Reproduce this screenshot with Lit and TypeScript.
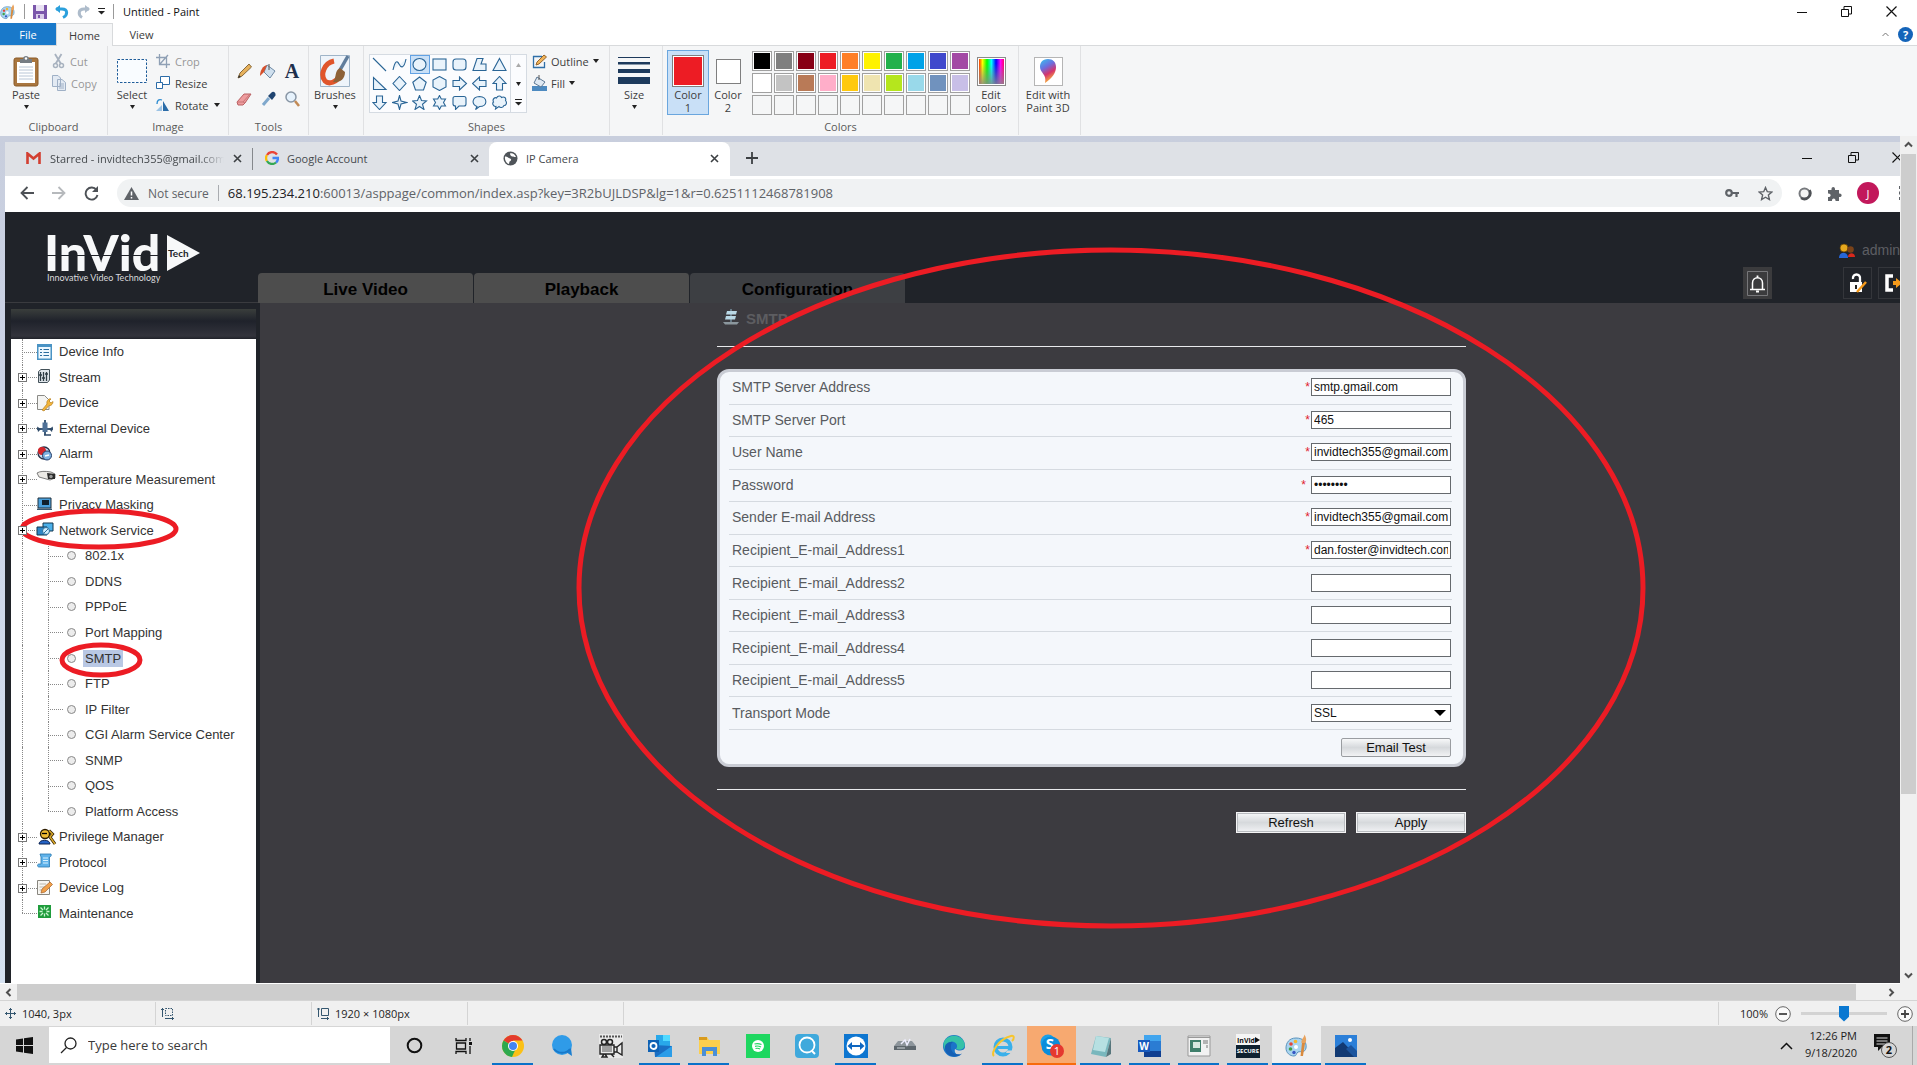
import { LitElement, html, svg, css, nothing, type TemplateResult } from "lit";
import { customElement } from "lit/decorators.js";
import { classMap } from "lit/directives/class-map.js";
import { styleMap } from "lit/directives/style-map.js";

const icon = (w: number, h: number, body: TemplateResult | unknown, vb = `0 0 ${w} ${h}`) =>
  html`<svg class="ico" width=${w} height=${h} viewBox=${vb} fill="none" aria-hidden="true">${body}</svg>`;

const base = css`
  * { box-sizing: border-box; }
  :host { font-family: "Open Sans", "Noto Sans", sans-serif; font-size: 11px; color: #222; }
  button { font: inherit; color: inherit; background: none; border: 0; padding: 0; margin: 0; }
  a { color: inherit; text-decoration: none; }
  ul { list-style: none; margin: 0; padding: 0; }
  svg { display: block; flex: none; }
`;

/* ---------- shared glyphs ---------- */
const caret = (w = 6) => icon(w, 4, svg`<path d="M0 0H${w}L${w / 2} 4Z" fill="#222"/>`);
const minGlyph = icon(10, 10, svg`<path d="M0 5.500H10" stroke="#111"/>`);
const restoreGlyph = icon(11, 11, svg`<path d="M.5 3.500H7.500V10.500H.5ZM3 3V.5H10.500V8H8" stroke="#111"/>`);
const closeGlyph = icon(11, 11, svg`<path d="M.5 .5L10.500 10.500M10.500 .5L.5 10.500" stroke="#111" stroke-width="1.200"/>`);
const paletteGlyph = (s: number) => icon(s, s, svg`
  <path d="M11 4C4 4 1 9 1 14c0 5 4 8 8 8 3 0 2-3 4-4 3-1 7 1 8-4C22 8 18 4 11 4Z" fill="#a9d4ef" stroke="#5b93bd"/>
  <circle cx="6" cy="10" r="1.800" fill="#e3463b"/><circle cx="10.500" cy="7.500" r="1.800" fill="#f5b62c"/>
  <circle cx="5.500" cy="15" r="1.800" fill="#43a047"/><circle cx="9" cy="18.500" r="1.700" fill="#3757c4"/><circle cx="11" cy="13" r="2" fill="#fff"/>
  <path d="M20 9L18 22L15.500 22L17 9Z" fill="#d98a3d"/><path d="M16.500 9C16 5 19 4 19.500 0.500C21.500 4 21.500 6 20.500 9Z" fill="#e9a35e"/>`, "0 0 24 24");

/* ---------- Paint ribbon ---------- */
const SHAPES = [
  svg`<path d="M1 1L14 14"/>`,
  svg`<path d="M1 13C3 4 5 3 7 7S12 12 14 2"/>`,
  svg`<ellipse cx="7.500" cy="7.500" rx="6.500" ry="6"/>`,
  svg`<rect x="1" y="2" width="13" height="11"/>`,
  svg`<rect x="1" y="2" width="13" height="11" rx="3"/>`,
  svg`<path d="M5 1.500H11L9 7H14V13.500H1Z"/>`,
  svg`<path d="M7.500 1.500L14 13.500H1Z"/>`,
  svg`<path d="M1.500 1.500V13.500H14Z"/>`,
  svg`<path d="M7.500 .5L14 7.500L7.500 14.500L1 7.500Z"/>`,
  svg`<path d="M7.500 1L14.200 6.200L11.500 14H3.500L.8 6.200Z"/>`,
  svg`<path d="M7.500 .5L14 4V11L7.500 14.500L1 11V4Z"/>`,
  svg`<path d="M1 4.500H7.500V1L14.500 7.500L7.500 14V10.500H1Z"/>`,
  svg`<path d="M14 4.500H7.500V1L.5 7.500L7.500 14V10.500H14Z"/>`,
  svg`<path d="M4.500 14V7.500H1L7.500 .5L14 7.500H10.500V14Z"/>`,
  svg`<path d="M4.500 1V7.500H1L7.500 14.500L14 7.500H10.500V1Z"/>`,
  svg`<path d="M7.500 .5L9 6L14.500 7.500L9 9L7.500 14.500L6 9L.5 7.500L6 6Z"/>`,
  svg`<path d="M7.500 .5L9.500 5.500L14.500 6L10.500 9.300L12 14.500L7.500 11.500L3 14.500L4.500 9.300L.5 6L5.500 5.500Z"/>`,
  svg`<path d="M7.500 .5L9.300 4H13.500L11.500 7.500L13.500 11H9.300L7.500 14.500L5.700 11H1.500L3.500 7.500L1.500 4H5.700Z"/>`,
  svg`<path d="M3 1.500H12Q14 1.500 14 3.500V9Q14 11 12 11H7L3.500 14.500V11Q1 11 1 9V3.500Q1 1.500 3 1.500Z"/>`,
  svg`<path d="M5 11.500C-1 9 0 2 7.500 1.500C16 2 16 11.500 7.500 11.500L3.500 14.500Z"/>`,
  svg`<path d="M4 11.500C1 12 0 8 1.500 7C0 4 3 2 4.500 3C6 0 9 1 9.500 2.500C12 1 14.500 3 13.500 5.500C15.500 8 14 10.500 12 10.500C11 13 8 13 7 11.500L3.500 14Z"/>`,
];
const SWATCHES = [
  "#000000", "#7f7f7f", "#880015", "#ed1c24", "#ff7f27", "#fff200", "#22b14c", "#00a2e8", "#3f48cc", "#a349a4",
  "#ffffff", "#c3c3c3", "#b97a57", "#ffaec9", "#ffc90e", "#efe4b0", "#b5e61d", "#99d9ea", "#7092be", "#c8bfe7",
  "", "", "", "", "", "", "", "", "", "",
];

@customElement("paint-ribbon")
export class PaintRibbon extends LitElement {
  static styles = [base, css`
    :host { display: block; background: #fff; }
    .title { height: 23px; display: flex; align-items: center; }
    .quick { display: flex; align-items: center; width: 123px; gap: 8px; }
    .quick .bar { width: 1px; height: 15px; background: #9a9a9a; }
    .name { font-size: 11px; color: #111; flex: 1; }
    .win { display: flex; gap: 34px; padding-right: 20px; }
    .tabs { height: 23px; display: flex; align-items: stretch; border-bottom: 1px solid #d8dadc; }
    .tab { width: 57px; color: #3c3c3c; }
    .tab.file { background: #1979ca; color: #fff; width: 56px; }
    .tab.home { background: #f5f6f7; border: 1px solid #d8dadc; border-bottom: 0; margin-bottom: -1px; }
    .help { margin-left: auto; display: flex; align-items: center; gap: 9px; padding-right: 4px; }
    .ribbon { display: flex; height: 90px; background: #f5f6f7; color: #3d3d3d; }
    .group { display: flex; flex-direction: column; padding-top: 4px; border-right: 1px solid #e0e1e3; margin-bottom: 1px; }
    .body { flex: 1; display: flex; align-items: flex-start; }
    .glabel { height: 16px; line-height: 16px; text-align: center; color: #5a5a5a; }
    .g1 { width: 108px; } .g2 { width: 121px; } .g3 { width: 80px; } .g4 { width: 55px; }
    .g5 { width: 246px; } .g6 { width: 53px; } .g7 { width: 356px; } .g8 { width: 62px; }
    .g7 .body { padding-left: 4px; }
    .big { display: flex; flex-direction: column; align-items: center; line-height: 13px; height: 65px; padding-top: 4px; }
    .big .pic { height: 34px; display: flex; align-items: center; justify-content: center; }
    .big .caret { padding-top: 4px; }
    .w52 { width: 52px; } .w48 { width: 48px; } .w54 { width: 54px; } .w42 { width: 42px; } .w38 { width: 38px; } .w61 { width: 58px; }
    .col { display: flex; flex-direction: column; }
    .small { height: 22px; display: flex; align-items: center; gap: 5px; }
    .dim { color: #979797; }
    .tools { display: grid; grid-template-columns: repeat(3, 24px); grid-template-rows: 28px 28px; padding: 7px 0 0 3px; }
    .tools button { display: grid; place-items: center; }
    .gallery { display: grid; grid-template-columns: repeat(7, 20px) 16px; grid-template-rows: repeat(3, 19px); border: 1px solid #d5dbe2; background: #fbfcfe; margin: 4px 0 0 5px; }
    .gallery button { display: grid; place-items: center; }
    .gallery .sel { background: #c9e0f7; border: 1px solid #62a2e4; }
    .gallery .scroll { border-left: 1px solid #d5dbe2; }
    .fillcol { padding-left: 5px; }
    .fillcol .small { gap: 4px; }
    .colour.sel { background: #c9e0f7; border: 1px solid #6aa6de; padding-top: 3px; }
    .sw { border: 1px solid #7f7f7f; padding: 1px; background: #fff; }
    .sw i { display: block; width: 100%; height: 100%; background: #ed1c24; }
    .sw1 { width: 32px; height: 32px; }
    .sw2 { width: 25px; height: 25px; padding: 0; }
    .palette { display: grid; grid-template-columns: repeat(10, 20px); grid-auto-rows: 20px; gap: 2px; padding: 1px 0 0 5px; }
    .palette button { border: 1px solid #a0a0a0; padding: 1px; background: #fff; }
    .palette button.none { background: #f5f6f7; }
    .palette i { display: block; height: 100%; }
    .rainbow { width: 29px; height: 29px; border: 1px solid #8a8a8a; outline: 1px solid #fff; outline-offset: -2px; background: linear-gradient(#0000 20%, #888d), linear-gradient(90deg, #f00, #ff0, #0f0, #0ff, #00f, #f0f, #f04); }
    .p3d { width: 29px; height: 29px; border: 1px solid #b5b5b5; background: #fff; display: grid; place-items: center; }
  `];

  render() {
    const big = (cls: string, pic: unknown, text: unknown, drop = false) => html`
      <button class="big ${cls}"><span class="pic">${pic}</span><span>${text}</span>
        ${drop ? html`<span class="caret">${caret(5)}</span>` : nothing}</button>`;
    return html`
      <div class="title">
        <div class="quick">
          ${paletteGlyph(16)}<span class="bar"></span>
          ${icon(14, 14, svg`<path d="M0 0H14V14H0Z" fill="#7b57ab"/><path d="M3 0H11V6H3Z" fill="#e9e2f3"/><path d="M3 9H11V14H3Z" fill="#d9cdea"/><path d="M5 10H7V13H5Z" fill="#7b57ab"/>`)}
          ${icon(14, 14, svg`<path d="M1 4H7C13 4 13 10 8 12.500" stroke="#2ba0dc" stroke-width="3"/><path d="M0 4L5 0V8Z" fill="#2ba0dc"/>`)}
          ${icon(13, 14, svg`<path d="M12 4H7C1 4 1 10 5 12.500" stroke="#aebccb" stroke-width="3"/><path d="M13 4L8 0V8Z" fill="#aebccb"/>`)}
          ${icon(7, 7, svg`<path d="M0 .5H7" stroke="#222"/><path d="M0 3H7L3.500 6.500Z" fill="#222"/>`)}
          <span class="bar"></span>
        </div>
        <span class="name">Untitled - Paint</span>
        <div class="win"><button aria-label="Minimize">${minGlyph}</button><button aria-label="Restore">${restoreGlyph}</button><button aria-label="Close">${closeGlyph}</button></div>
      </div>
      <div class="tabs">
        <button class="tab file">File</button><button class="tab home">Home</button><button class="tab">View</button>
        <div class="help">
          ${icon(7, 5, svg`<path d="M.5 4L3.500 1L6.500 4" stroke="#777"/>`)}
          ${icon(15, 15, svg`<circle cx="7.500" cy="7.500" r="7.500" fill="#1464b9"/><text x="7.500" y="11.500" font-size="11" font-weight="700" fill="#fff" text-anchor="middle">?</text>`)}
        </div>
      </div>
      <div class="ribbon">
        <section class="group g1"><div class="body">
          ${big("w52", icon(26, 32, svg`<rect x="1" y="3" width="24" height="28" rx="2" fill="#a9763f" stroke="#8a5a28"/><path d="M4 7H22V28H4Z" fill="#fff"/><path d="M6 12H20M6 15H20M6 18H20M6 21H20M6 24H20" stroke="#b9c6d6"/><path d="M7 8V4H10C10 0 16 0 16 4H19V8Z" fill="#767d84"/><circle cx="13" cy="3.500" r="1.200" fill="#fff"/>`), "Paste", true)}
          <div class="col">
            <button class="small dim">${icon(13, 16, svg`<path d="M3 1L9 11M9.500 1L3.500 11" stroke="#a8b2bf" stroke-width="1.800"/><circle cx="3.500" cy="12.500" r="2" stroke="#a8b2bf" stroke-width="1.500"/><circle cx="9.500" cy="12.500" r="2" stroke="#a8b2bf" stroke-width="1.500"/>`)}Cut</button>
            <button class="small dim">${icon(14, 16, svg`<path d="M.5 .5H6L8.500 3V11.500H.5ZM5.500 4.500H10L13.500 7.500V15.500H5.500Z" fill="#e3eaf3" stroke="#9fb0c6"/><path d="M7 9H12M7 11H12M7 13H12" stroke="#9fb0c6"/>`)}Copy</button>
          </div></div><div class="glabel">Clipboard</div></section>
        <section class="group g2"><div class="body">
          ${big("w48", icon(30, 24, svg`<rect x=".5" y=".5" width="29" height="23" stroke="#1f5c99" stroke-dasharray="2.500 1.500" fill="#f9fcff"/>`), "Select", true)}
          <div class="col">
            <button class="small dim">${icon(14, 14, svg`<path d="M3.500 0V10.500H14M0 3.500H10.500V14M4 10L12 1" stroke="#8fa0b5" stroke-width="1.300"/>`)}Crop</button>
            <button class="small">${icon(14, 14, svg`<path d="M4.500 .5H13.500V8.500H4.500Z" stroke="#2b6ca8" fill="#fff"/><path d="M.5 6.500H6.500V12.500H.5Z" stroke="#2b6ca8" fill="#fff"/>`)}Resize</button>
            <button class="small">${icon(14, 14, svg`<path d="M0 13H6V7Z" fill="#9cc3e5"/><path d="M7 13V3L13 13Z" fill="#2b6ca8"/><path d="M1 6C1 2 3 1 6 2" stroke="#2b8ad0" stroke-width="1.300"/>`)}Rotate ${caret(6)}</button>
          </div></div><div class="glabel">Image</div></section>
        <section class="group g3"><div class="body"><div class="tools">
          <button aria-label="Pencil">${icon(15, 16, svg`<path d="M1 15L3 10L12 1L14.500 4L5 13Z" fill="#e6b15c" stroke="#8a6a3a"/><path d="M1 15L2 12L4 14Z" fill="#333"/>`)}</button>
          <button aria-label="Fill with color">${icon(16, 16, svg`<path d="M7 2L15 8L10 15L4 9Z" fill="#cfe0ef" stroke="#6f8aa5"/><path d="M9 7V1" stroke="#555"/><path d="M0 13C0 7 3 3 7 2L4 9Z" fill="#d6502c"/>`)}</button>
          <button aria-label="Text">${icon(16, 17, svg`<text x="8" y="15" font-family="Liberation Serif" font-weight="700" font-size="20" fill="#1e2f4c" text-anchor="middle">A</text>`)}</button>
          <button aria-label="Eraser">${icon(16, 13, svg`<path d="M1 9L8 1H15L9 10L7 12H2Z" fill="#ee9c9e" stroke="#b96062"/><path d="M1 9H7L9 10M7 9L14 1" stroke="#c97577"/>`)}</button>
          <button aria-label="Color picker">${icon(15, 16, svg`<path d="M2 14L8 7" stroke="#7fa8cc" stroke-width="3"/><path d="M7 5L11 9L14.500 4.500C15 1 12 0 10.500 1.500Z" fill="#1f4470"/>`)}</button>
          <button aria-label="Magnifier">${icon(15, 16, svg`<circle cx="6" cy="6" r="5" fill="#e6f2fc" stroke="#8896a5" stroke-width="1.500"/><path d="M10 10L14 15" stroke="#c28a55" stroke-width="2.500"/>`)}</button>
        </div></div><div class="glabel">Tools</div></section>
        <section class="group g4"><div class="body">
          ${big("w52", icon(30, 32, svg`<path d="M.5 .5H29.500V31.500H.5Z" fill="#eef4fa" stroke="#9fb4c8"/><path d="M14 6C4 8 0 20 5 26C9 30 17 27 19 21" stroke="#e0552b" stroke-width="5"/><path d="M28 1L20 15" stroke="#5f7d9c" stroke-width="3.500"/><path d="M20 13L25 17C25 25 19 28 13 27C17 22 14 16 20 13Z" fill="#8d6238"/>`), "Brushes", true)}
        </div><div class="glabel"></div></section>
        <section class="group g5"><div class="body">
          <div class="gallery">${[0, 1, 2].map((r) => html`
            ${SHAPES.slice(r * 7, r * 7 + 7).map((s, i) => html`<button class=${classMap({ sel: r === 0 && i === 2 })} aria-label="Shape ${r * 7 + i + 1}">
              ${icon(16, 15, svg`<g stroke="#2a6596" stroke-width="1.100" fill="#e9f3fb">${s}</g>`)}</button>`)}
            <button class="scroll" aria-label="Scroll shapes">${r === 0 ? icon(5, 4, svg`<path d="M0 4H5L2.500 0Z" fill="#aaa"/>`) : r === 1 ? caret(5) : icon(7, 7, svg`<path d="M0 .5H7" stroke="#222"/><path d="M0 3H7L3.500 6.500Z" fill="#222"/>`)}</button>`)}
          </div>
          <div class="col fillcol">
            <button class="small">${icon(15, 15, svg`<path d="M1 2.500H10M1.500 2V13.500H12.500V8" stroke="#2f6fa8" stroke-width="1.300"/><path d="M4 11L5 8L12 1L14.500 3L7 10Z" fill="#f0b45a" stroke="#96652c"/>`)}Outline ${caret(6)}</button>
            <button class="small">${icon(15, 16, svg`<path d="M0 11H15V16H0Z" fill="#4d8ac0"/><path d="M5 2L13 7L9 12L2 8Z" fill="#dfe9f3" stroke="#5c7894"/><path d="M7 5V0" stroke="#555"/>`)}Fill ${caret(6)}</button>
          </div></div><div class="glabel">Shapes</div></section>
        <section class="group g6"><div class="body">
          ${big("w48", icon(32, 28, svg`<path d="M0 0H32V1H0ZM0 5H32V7.500H0ZM0 12H32V16H0ZM0 20H32V27H0Z" fill="#1d3a5c"/>`), "Size", true)}
        </div><div class="glabel"></div></section>
        <section class="group g7"><div class="body">
          ${big("w42 colour sel", html`<span class="sw sw1"><i></i></span>`, html`Color<br>1`)}
          ${big("w38 colour", html`<span class="sw sw2"></span>`, html`Color<br>2`)}
          <div class="palette">${SWATCHES.map((c) => html`<button class=${c ? "" : "none"} aria-label="Color ${c || "empty"}"><i style=${styleMap({ background: c || "transparent" })}></i></button>`)}</div>
          ${big("w42", html`<span class="rainbow"></span>`, html`Edit<br>colors`)}
        </div><div class="glabel">Colors</div></section>
        <section class="group g8"><div class="body">
          ${big("w61", html`<span class="p3d">${icon(18, 24, svg`<defs><linearGradient id="d" x1="0" y1="0" x2=".4" y2="1"><stop offset="0" stop-color="#35c6ef"/><stop offset=".4" stop-color="#6a6fe0"/><stop offset=".7" stop-color="#d6336c"/><stop offset="1" stop-color="#f6b13c"/></linearGradient></defs><path d="M9 0C3 0 1 4 1 8C1 14 8 15 6 24C14 19 17 13 17 8C17 3 14 0 9 0Z" fill="url(#d)"/>`)}</span>`, html`Edit with<br>Paint 3D`)}
        </div><div class="glabel"></div></section>
      </div>`;
  }
}

/* ---------- browser chrome ---------- */
@customElement("browser-bar")
export class BrowserBar extends LitElement {
  static styles = [base, css`
    :host { display: block; background: #dee1e6; }
    .strip { height: 34px; display: flex; align-items: stretch; color: #45494d; }
    .tab { display: flex; align-items: center; gap: 9px; width: 247px; padding: 0 10px 2px 21px; }
    .tab.second { width: 237px; padding: 0 10px 2px 12px; gap: 8px; border-left: 1px solid #85888c; border-image: linear-gradient(#0000 20%, #85888c 20%, #85888c 80%, #0000 80%) 1; }
    .tab.on { background: #fff; border-radius: 8px 8px 0 0; width: 241px; padding-left: 14px; padding-right: 11px; gap: 8px; }
    .tab span { flex: 1; white-space: nowrap; overflow: hidden; }
    .fade { mask-image: linear-gradient(90deg, #000 86%, #0000); }
    .plus { margin: 0 0 2px 16px; }
    .win { margin-left: auto; display: flex; align-items: center; gap: 36px; margin-right: -3px; padding-bottom: 3px; }
    .win .close { margin-left: -3px; }
    .bar { height: 36px; background: #fff; display: flex; align-items: center; padding: 0 0 2px 15px; color: #5f6368; }
    .nav { display: flex; gap: 18px; width: 97px; }
    .pill { flex: 1; min-width: 0; height: 28px; border-radius: 14px; background: #f0f2f3; display: flex; align-items: center; padding: 0 9px 0 7px; gap: 9px; font-size: 12px; margin-right: 15px; }
    .pill .sep { width: 1px; height: 16px; background: #a9acb0; }
    .url { font-size: 13px; flex: 1; color: #5f6368; white-space: nowrap; }
    .url b { font-weight: 400; color: #202124; }
    .right { display: flex; align-items: center; gap: 15px; margin-right: -3px; }
    .face { width: 22px; height: 22px; border-radius: 50%; background: #c2185b; color: #fff; display: grid; place-items: center; margin-right: 5px; }
  `];
  render() {
    const x = icon(9, 9, svg`<path d="M1 1L8 8M8 1L1 8" stroke="#3c4043" stroke-width="1.600"/>`);
    return html`
      <div class="strip" role="tablist">
        <div class="tab" role="tab">${icon(15, 12, svg`<path d="M1.500 12V1.500L7.500 6.500L13.500 1.500V12" stroke="#d23f31" stroke-width="2.600"/>`)}<span class="fade">Starred - invidtech355@gmail.com</span>${x}</div>
        <div class="tab second" role="tab">${icon(14, 14, svg`
          <path d="M12 3.500A6 6 0 0 0 2 4" stroke="#ea4335" stroke-width="2.300"/><path d="M1.900 4A6 6 0 0 0 1.900 10" stroke="#fbbc05" stroke-width="2.300"/>
          <path d="M1.900 10A6 6 0 0 0 11 11.500" stroke="#34a853" stroke-width="2.300"/><path d="M11 11.500Q13 10 13 7H7.500" stroke="#4285f4" stroke-width="2.300"/>`)}<span>Google Account</span>${x}</div>
        <div class="tab on" role="tab">${icon(15, 15, svg`<circle cx="7.500" cy="7.500" r="7" fill="#4f5459"/><path d="M2 5.500C4 5 5 7 7 7.500C9 8 8 10 6.500 10.500C6 12 6.500 13 5.500 13C3 12 1.500 9 2 5.500ZM7 2.500C9 1.500 12 3 13 6C11 6.500 10.500 5 9 5.500C8 5 7 4 7 2.500Z" fill="#fff"/>`)}<span>IP Camera</span>${x}</div>
        <button class="plus" aria-label="New tab">${icon(12, 12, svg`<path d="M6 0V12M0 6H12" stroke="#3c4043" stroke-width="1.800"/>`)}</button>
        <div class="win"><button aria-label="Minimize">${minGlyph}</button><button aria-label="Restore">${restoreGlyph}</button><button class="close" aria-label="Close">${closeGlyph}</button></div>
      </div>
      <div class="bar">
        <div class="nav">
          <button aria-label="Back">${icon(14, 14, svg`<path d="M14 7H2M7.500 1L1.500 7L7.500 13" stroke="#4d5156" stroke-width="1.800"/>`)}</button>
          <button aria-label="Forward">${icon(14, 14, svg`<path d="M0 7H12M6.500 1L12.500 7L6.500 13" stroke="#b6b9bc" stroke-width="1.800"/>`)}</button>
          <button aria-label="Reload">${icon(15, 15, svg`<path d="M12.500 4A6 6 0 1 0 13.500 9" stroke="#4d5156" stroke-width="1.900"/><path d="M14 0V6H8Z" fill="#4d5156"/>`)}</button>
        </div>
        <div class="pill">
          ${icon(15, 13, svg`<path d="M7.500 0L15 13H0Z" fill="#5f6368"/><path d="M7.500 4.500V8.500M7.500 10V11.500" stroke="#fff" stroke-width="1.500"/>`)}
          <span>Not secure</span><i class="sep"></i>
          <span class="url"><b>68.195.234.210</b>:60013/asppage/common/index.asp?key=3R2bUJLDSP&amp;lg=1&amp;r=0.6251112468781908</span>
          ${icon(15, 10, svg`<circle cx="4" cy="5" r="2.800" stroke="#5f6368" stroke-width="2.200"/><path d="M7 5H14M11.500 5V9" stroke="#5f6368" stroke-width="2.200"/>`)}
          <i></i>
          ${icon(15, 15, svg`<path d="M7.500 1.500L9.300 5.700L13.800 6.100L10.400 9.100L11.400 13.500L7.500 11.200L3.600 13.500L4.600 9.100L1.200 6.100L5.700 5.700Z" stroke="#5f6368" stroke-width="1.400"/>`)}
        </div>
        <div class="right">
          ${icon(15, 15, svg`<circle cx="7.500" cy="7.500" r="5" fill="#f4f4f4" stroke="#777a7e" stroke-width="2"/><path d="M4 12A6 6 0 0 0 12.500 4" stroke="#4e5155" stroke-width="2.500"/>`)}
          ${icon(15, 15, svg`<path d="M1 4H4.500C4 0 8.500 0 8 4H12V7.500C15.500 7 15.500 11.500 12 11V15H8.500C9 11.500 4.500 11.500 5 15H1V11C4.500 11.500 4.500 7 1 7.500Z" fill="#5f6368"/>`)}
          <button class="face">J</button>
          ${icon(4, 14, svg`<path d="M0 0H3V3H0ZM0 5.500H3V8.500H0ZM0 11H3V14H0Z" fill="#5f6368"/>`)}
        </div>
      </div>`;
  }
}

/* ---------- camera web page ---------- */
interface Node { t: string; lvl?: 1; plus?: boolean; sel?: boolean; last?: boolean; ico?: unknown; }
const NODES: Node[] = [
  { t: "Device Info", ico: svg`<path d="M0 0H15V16H0Z" fill="#4a93c4"/><path d="M1.500 3H13.500V14.500H1.500Z" fill="#eef8ff"/><path d="M3 5.500H5M3 8.500H5M3 11.500H5M6.500 5.500H12M6.500 8.500H12M6.500 11.500H12" stroke="#2b6d9e"/>` },
  { t: "Stream", plus: true, ico: svg`<path d="M1.500 2.500L4 .5H12.500V11L10.500 13.500H1.500Z" fill="#dfe5ea" stroke="#435159"/><path d="M3.500 3V12M6.500 3V12M9.500 3V12M2 6H5M5 9H8M8 5H11" stroke="#2f3c44" stroke-width="1.300"/>` },
  { t: "Device", plus: true, ico: svg`<path d="M.5 .5H7.500L12 5V14.500H.5Z" fill="#f4f4f2" stroke="#8a8a86"/><path d="M5 15L10 9C9 5 13 3 14 4L12 6L14 8L16 6.500C16 10 13 11 12 10.500L7 16Z" fill="#f3b53a" stroke="#b57d1b" stroke-width=".7"/>` },
  { t: "External Device", plus: true, ico: svg`<path d="M8 0V15M0 9H16" stroke="#3f5d7c" stroke-width="2"/><path d="M5.500 2.500H10.500V12H5.500Z" fill="#4f7197"/><path d="M0 6.500L4 9L1 12ZM16 6.500L12 9L15 12Z" fill="#2f4a68"/><path d="M7 15H14" stroke="#2f4a68" stroke-width="1.500"/>` },
  { t: "Alarm", plus: true, ico: svg`<circle cx="7" cy="7" r="6" fill="#c9dcf0" stroke="#26324a" stroke-width="1.300"/><circle cx="5" cy="5" r="4" fill="#d4252a"/><circle cx="10" cy="9.500" r="4.500" fill="#7fb1e0" stroke="#223a66"/><path d="M8 10L12 9" stroke="#fff" stroke-width="1.300"/>` },
  { t: "Temperature Measurement", plus: true, ico: svg`<path d="M0 2C3 0 8 0 14 1L18 3V7L13 9L2 6Z" fill="#eceae6" stroke="#5e5e5e" stroke-width=".8"/><path d="M10 2L18 3V8H11Z" fill="#2b2b2b"/><circle cx="14" cy="5.500" r="1.700" fill="#9a9a9a"/>` },
  { t: "Privacy Masking", ico: svg`<path d="M1 1H14V11H1Z" fill="#4aa0dc" stroke="#20303c"/><path d="M5 3H12V8H5Z" fill="#10202c"/><path d="M0 11.500H15V13H0Z" fill="#39566e"/>` },
  { t: "Network Service", plus: true, ico: svg`<path d="M6 1H16V9H6Z" fill="#4bb0ea" stroke="#12364f"/><path d="M0 5H10V13H0Z" fill="#2d87c7" stroke="#12364f"/><circle cx="9" cy="9" r="3.500" fill="#cfeeff" stroke="#2a6f9c"/><path d="M7 11L11 7" stroke="#2a6f9c"/>` },
  ...["802.1x", "DDNS", "PPPoE", "Port Mapping", "SMTP", "FTP", "IP Filter", "CGI Alarm Service Center", "SNMP", "QOS", "Platform Access"]
    .map((t): Node => ({ t, lvl: 1, sel: t === "SMTP", last: t === "Platform Access" })),
  { t: "Privilege Manager", plus: true, ico: svg`<circle cx="8" cy="5" r="4.500" fill="#f0bb33" stroke="#2c1b00" stroke-width="1.300"/><path d="M2 15C2 10 13 10 13 15Z" fill="#2563c4" stroke="#0d2250"/><path d="M12 1.500L15.500 5L13 8L18 15" stroke="#2c1b00" stroke-width="3"/><path d="M12 1.500L15.500 5L13 8L18 15" stroke="#d9a92a" stroke-width="1.500"/><path d="M5 4.500H10" stroke="#000" stroke-width="1.300"/>` },
  { t: "Protocol", plus: true, ico: svg`<path d="M3 0H14C15 2 13 3 12.500 3V13H2C0 13 0 10 2 10H4V3Z" fill="#5fb2ea" stroke="#2b78b0" stroke-width=".8"/><path d="M6 4H11M6 6.500H11M6 9H11" stroke="#d9f1ff"/>` },
  { t: "Device Log", plus: true, ico: svg`<path d="M.5 .5H12.500V14.500H.5Z" fill="#f7f6f2" stroke="#88867f"/><path d="M2.500 4H9M2.500 7H8M2.500 10H6" stroke="#b9b7ae"/><path d="M4 13L5 9L13 2L15.500 4.500L8 12Z" fill="#f0a04a" stroke="#a4602a" stroke-width=".7"/>` },
  { t: "Maintenance", last: true, ico: svg`<path d="M1 0H14V13H1Z" fill="#1f9c3c"/><path d="M7.500 1.500V4.500M7.500 8.500V11.500M2.500 6.500H5.500M9.500 6.500H12.500M3.500 2.500L6 5M9 8L11.500 10.500M11.500 2.500L9 5M6 8L3.500 10.500" stroke="#c8f5cf" stroke-width="1.300"/>` },
];
interface Field { l: string; v?: string; req?: boolean; pw?: boolean; sel?: boolean; }
const FIELDS: Field[] = [
  { l: "SMTP Server Address", v: "smtp.gmail.com", req: true },
  { l: "SMTP Server Port", v: "465", req: true },
  { l: "User Name", v: "invidtech355@gmail.com", req: true },
  { l: "Password", v: "abcdefgh", req: true, pw: true },
  { l: "Sender E-mail Address", v: "invidtech355@gmail.com", req: true },
  { l: "Recipient_E-mail_Address1", v: "dan.foster@invidtech.com", req: true },
  { l: "Recipient_E-mail_Address2" }, { l: "Recipient_E-mail_Address3" },
  { l: "Recipient_E-mail_Address4" }, { l: "Recipient_E-mail_Address5" },
  { l: "Transport Mode", sel: true },
];

@customElement("camera-page")
export class CameraPage extends LitElement {
  static styles = [base, css`
    :host { display: flex; flex-direction: column; flex: 1; background: #3c3b40; font-family: "Liberation Sans", Arial, sans-serif; font-size: 14px; }
    header { height: 91px; background: #202329; display: flex; align-items: flex-end; }
    .brand { width: 253px; height: 100%; padding: 20px 0 0 38px; border-bottom: 1px solid #3a3b3f; }
    .tabs { display: flex; }
    .tab { width: 216px; height: 30px; display: block; text-align: center; line-height: 34px; font-weight: 700; font-size: 17px; color: #000; background: #4d4d4d; border-radius: 4px 4px 0 0; border-right: 1px solid #202329; }
    .tab.on { background: #3d3f43; }
    .user { margin-left: auto; align-self: stretch; width: 157px; overflow: hidden; display: flex; flex-direction: column; align-items: flex-start; color: #5d5e63; padding-top: 29px; }
    .who { display: flex; align-items: center; gap: 7px; padding-left: 95px; height: 18px; white-space: nowrap; }
    .acts { display: flex; padding-top: 8px; }
    .act { width: 29px; height: 32px; display: grid; place-items: center; border: 1px solid #34363b; flex: none; }
    .act.bell { background: #3b3b3d; border-color: #3b3b3d; margin-right: 71px; }
    .act + .act + .act { margin-left: 6px; }
    .main { flex: 1; display: flex; }
    aside { width: 251px; background: #fff; border: solid #202329; border-width: 6px 0 0 6px; display: flex; flex-direction: column; }
    .cap { height: 30px; background: linear-gradient(#3a3e3c, #1f222b 40%, #33343c 90%, #202229); flex: none; }
    .edge { width: 4px; background: #202329; }
    .tree { flex: 1; display: grid; grid-auto-rows: 1fr; padding-bottom: 57px; color: #333; font-size: 13px; }
    .row { display: flex; align-items: center; padding-left: 11px; }
    .stem { width: 26px; align-self: stretch; position: relative; flex: none; }
    .stem::before { content: ""; position: absolute; left: 0; top: 0; bottom: 0; border-left: 1px dotted #888; }
    .stem.h::after { content: ""; position: absolute; left: 0; width: 15px; top: 50%; border-top: 1px dotted #888; }
    .stem.last::before { bottom: 50%; }
    .box { position: absolute; left: -4px; top: 50%; margin-top: -4px; width: 9px; height: 9px; border: 1px solid #777; background: #fff; z-index: 1; }
    .box::before, .box::after { content: ""; position: absolute; background: #000; }
    .box::before { left: 1px; right: 1px; top: 3px; height: 1px; }
    .box::after { top: 1px; bottom: 1px; left: 3px; width: 1px; }
    .nico { width: 22px; margin-left: -11px; flex: none; }
    .row .ico { overflow: visible; }
    .dot { width: 9px; height: 9px; border: 1px solid #888; border-radius: 50%; background: #ececec; margin: 0 9px 0 -7px; flex: none; }
    .row a { white-space: nowrap; }
    .row a.sel { background: #b9c8e4; padding: 1px 2px; margin-left: -2px; }
    .content { flex: 1; display: flex; flex-direction: column; align-items: center; padding-left: 23px; }
    form { width: 749px; display: flex; flex-direction: column; }
    h1 { margin: 0; height: 44px; border-bottom: 1px solid #e8e9ec; display: flex; align-items: flex-start; gap: 7px; padding: 6px 0 0 6px; font-size: 15px; line-height: 20px; color: #5d5d61; }
    .panel { margin-top: 22px; border: 3px solid #c9ccd4; border-radius: 12px; background: #f4f7fb; padding: 0 11px 0 9px; }
    .fields { height: 358px; display: grid; grid-auto-rows: 1fr; }
    .field { display: flex; align-items: center; border-bottom: 1px solid #d5dae0; padding: 0 1px 1px 3px; }
    .field label { color: #585b60; flex: 1; }
    .req { color: #e0222e; font-size: 12px; line-height: 12px; margin-right: 1px; }
    .req.pw { margin-right: 5px; }
    .box2 { width: 140px; height: 18px; border: 1px solid #666a6e; border-radius: 0; background: #fff; padding: 0 2px; font: 12px/16px "Liberation Sans", Arial, sans-serif; color: #111; appearance: none; outline: 0; }
    .pick { display: flex; position: relative; }
    .pick svg { position: absolute; right: 5px; top: 6px; pointer-events: none; }
    .foot { display: flex; justify-content: flex-end; padding: 8px 1px 7px 0; }
    .btn { width: 110px; font-size: 13px; color: #111; border: 1px solid #9a9da1; background: linear-gradient(#f7f8f9, #d6d9dc 50%, #f1f2f4); }
    .test { height: 19px; border-radius: 2px; }
    .acts2 { margin-top: 22px; border-top: 1px solid #e8e9ec; display: flex; justify-content: flex-end; gap: 10px; padding-top: 22px; }
    .acts2 .btn { height: 21px; border-color: #f4f4f5; box-shadow: inset 0 0 0 1px #b9bcc0; }
  `];
  render() {
    return html`
      <header>
        <div class="brand"><svg width="160" height="56" viewBox="-4 0 160 56" aria-label="InVid Tech">
          <text x="-3" y="39" font-family="Lato" font-weight="900" font-size="50" fill="#f7f8f9">InVid</text>
          <path d="M120 3L153 21L120 39Z" fill="#f7f8f9"/><path d="M0 23.500H119" stroke="#202329" stroke-width="1"/>
          <text x="121" y="25" font-family="Lato" font-weight="700" font-size="10" fill="#202329">Tech</text>
          <text x="0" y="49" font-family="Lato" font-size="9" fill="#d8d9db">Innovative Video Technology</text></svg></div>
        <nav class="tabs"><a class="tab" href="#live">Live Video</a><a class="tab" href="#playback">Playback</a><a class="tab on" href="#config">Configuration</a></nav>
        <div class="user">
          <div class="who">${icon(17, 15, svg`<circle cx="6" cy="5" r="4" fill="#e6a81e" stroke="#5a3a00" stroke-width=".7"/><path d="M1 15C1 8 10 8 10 15Z" fill="#2566d8"/><circle cx="12.500" cy="6.500" r="3.300" fill="#7a4218"/><path d="M10 14C10 9 17 9 17 14Z" fill="#d8281c"/>`)}<span>admin</span></div>
          <div class="acts">
            <button class="act bell" aria-label="Alarms">${icon(21, 25, svg`<path d="M.5 .5H20.500V24.500H.5Z" stroke="#77777a"/><path d="M3 18.500H18M5.500 18V12C5.500 5 15.500 5 15.500 12V18" stroke="#fff" stroke-width="1.500"/><path d="M9 20.500H12M10.500 4.500V6.500" stroke="#fff" stroke-width="1.800"/>`)}</button>
            <button class="act" aria-label="Change password">${icon(18, 20, svg`<path d="M1 9H13V19H1Z" fill="#fff"/><path d="M4 6C3 0 12 0 11 6V9" stroke="#fff" stroke-width="2.300"/><path d="M7 12V16" stroke="#222" stroke-width="2"/><path d="M17 9L8 19" stroke="#f59a1b" stroke-width="2.500"/>`)}</button>
            <button class="act" aria-label="Log out">${icon(18, 18, svg`<path d="M9 2H3V16H9" stroke="#fff" stroke-width="3.500"/><path d="M9 7H12V4L18 9L12 14V11H9Z" fill="#f59a1b"/>`)}</button>
          </div>
        </div>
      </header>
      <div class="main">
        <aside><div class="cap"></div>
          <ul class="tree">${NODES.map((n) => html`<li class="row">
            <span class=${classMap({ stem: true, h: !n.lvl, last: !!n.last && !n.lvl })}>${n.plus ? html`<i class="box"></i>` : nothing}</span>
            ${n.lvl ? html`<span class=${classMap({ stem: true, h: true, last: !!n.last })}></span><i class="dot"></i>` : html`<span class="nico">${icon(16, 16, n.ico)}</span>`}
            <a href="#${n.t}" class=${classMap({ sel: !!n.sel })}>${n.t}</a></li>`)}</ul>
        </aside><div class="edge"></div>
        <div class="content"><form @submit=${(e: Event) => e.preventDefault()}>
          <h1>${icon(16, 17, svg`<path d="M8 0V15" stroke="#8fb8cc"/><path d="M4 2H14L13 5.500H3ZM3 7H13L12 10.500H2Z" fill="#b9d8e6"/><path d="M0 13H16L14 15.500H2Z" fill="#8b979e"/>`)}SMTP</h1>
          <div class="panel">
            <div class="fields">${FIELDS.map((f, i) => html`<div class="field">
              <label for="f${i}">${f.l}</label>
              ${f.req ? html`<span class=${classMap({ req: true, pw: !!f.pw })}>*</span>` : nothing}
              ${f.sel ? html`<span class="pick"><select class="box2" id="f${i}"><option>SSL</option></select>${icon(12, 6, svg`<path d="M0 0H12L6 6Z" fill="#000"/>`)}</span>`
                : html`<input class="box2" id="f${i}" type=${f.pw ? "password" : "text"} .value=${f.v ?? ""}>`}
            </div>`)}</div>
            <div class="foot"><button class="btn test" type="button">Email Test</button></div>
          </div>
          <div class="acts2"><button class="btn" type="button">Refresh</button><button class="btn" type="button">Apply</button></div>
        </form></div>
      </div>`;
  }
}

/* ---------- Windows taskbar ---------- */
const APPS: { n: string; run?: boolean; cls?: string; g: unknown }[] = [
  { n: "Chrome", run: true, g: svg`<circle cx="12" cy="12" r="11" fill="#fbc116"/><path d="M12 12L2.500 6.500A11 11 0 0 1 21.500 6.500H12Z" fill="#e33b2e"/><path d="M12 12L2.500 6.500A11 11 0 0 0 11 23L15 14Z" fill="#2da94f"/><circle cx="12" cy="12" r="5" fill="#fff"/><circle cx="12" cy="12" r="4" fill="#4285f4"/>` },
  { n: "Chat", g: svg`<circle cx="12" cy="11" r="10" fill="#2f9be8"/><path d="M16 18L22 22L21 14Z" fill="#1c7fd0"/><path d="M4 15C8 20 16 20 20 15" stroke="#1878c8" stroke-width="2"/>` },
  { n: "Camera", g: svg`<path d="M0 0H24V24H0Z" fill="#e9e9e9"/><path d="M1 2.500H23" stroke="#555" stroke-width="2" stroke-dasharray="2 1"/><circle cx="5" cy="8" r="2.500" stroke="#222" stroke-width="1.500"/><circle cx="11" cy="8" r="2.500" stroke="#222" stroke-width="1.500"/><path d="M1 11H15V20H1ZM15 13H18V18H15M18 13L23 9V21L18 18M5 20L3 23H8L6 20M12 20L15 23" stroke="#222" stroke-width="1.400"/><path d="M3 13H13M3 15H13M3 17H13" stroke="#555"/>` },
  { n: "Outlook", run: true, g: svg`<path d="M8 1H22V12H8Z" fill="#28a8ea"/><path d="M15 1H22V7H15Z" fill="#50d9ff"/><path d="M6 11L24 12V23H7Z" fill="#1a6fc4"/><path d="M24 12L8 23H24Z" fill="#2b9de8"/><path d="M0 6H11V18H0Z" fill="#0f62b4"/><circle cx="5.500" cy="12" r="3" stroke="#fff" stroke-width="1.800"/>` },
  { n: "File Explorer", run: true, g: svg`<path d="M2 3H10L12 6H23V20H2Z" fill="#fccf4d"/><path d="M2 3H10V6H2Z" fill="#d99b1d"/><path d="M5 13H20V22H16V17H9V22H5Z" fill="#4b8fd6"/>` },
  { n: "Spotify", g: svg`<path d="M0 0H24V24H0Z" fill="#1ed760"/><circle cx="12" cy="12" r="6" fill="#fff"/><path d="M8.500 10Q12 9 15.500 10.500M9 12.300Q12 11.500 15 13M9.500 14.500Q12 13.800 14 15" stroke="#1ed760" stroke-width="1.200"/>` },
  { n: "Search tool", g: svg`<rect width="24" height="24" rx="4" fill="#3fa9dc"/><circle cx="12" cy="11" r="7.500" stroke="#fff" stroke-width="1.800"/><path d="M17 17L20 20" stroke="#fff" stroke-width="2"/>` },
  { n: "TeamViewer", run: true, g: svg`<path d="M0 0H24V24H0Z" fill="#0e76d0"/><circle cx="12" cy="12" r="9.500" fill="#fff"/><path d="M3.500 12L8 8V11H16V8L20.500 12L16 16V13H8V16Z" fill="#0e66c0"/>` },
  { n: "Drive", g: svg`<path d="M1 12L5 7H19L23 12V16H1Z" fill="#8d959b"/><path d="M1 12H23V16H1Z" fill="#5e676d"/><path d="M8 10L12 6L14 11L17 5" stroke="#eef" stroke-width="1.500"/><path d="M4 14H12" stroke="#cfd6da"/>` },
  { n: "Edge", g: svg`<circle cx="12" cy="12" r="11" fill="#1b74c9"/><path d="M2 8C5 0 19 -1 22.500 9C24 15 18 17 14 15C17 11 13 7 9 8C5 9 4 14 7 18C2 16 .5 12 2 8Z" fill="#35c1a8"/><path d="M13 15C18 18 22 16 23 14L24 19L18 21C14 21 12 18 13 15Z" fill="#d6d6d6"/><path d="M9 12C8 19 15 22 20 19.500C16 24 5 24 3 15C2 10 7 7 11 8C9 9 9 11 9 12Z" fill="#1660b4"/>` },
  { n: "Internet Explorer", run: true, g: svg`<circle cx="12" cy="13" r="7.500" stroke="#39b0ea" stroke-width="4"/><path d="M6 13.500H20" stroke="#39b0ea" stroke-width="3"/><path d="M16 16.500H22V19H15Z" fill="#d5d5d5"/><path d="M3 22C-1 19 8 5 20 2C24 1 23 5 21 7" stroke="#f7c52c" stroke-width="2"/>` },
  { n: "Skype", run: true, cls: "alert", g: svg`<circle cx="8" cy="8" r="7.500" fill="#1aa0e8"/><circle cx="11" cy="12" r="9.500" fill="#0a8ddb"/><text x="10" y="15" font-size="15" font-weight="700" text-anchor="middle" fill="#fff">S</text><circle cx="17" cy="17" r="7" fill="#e5382f"/><text x="17" y="21" font-size="11" text-anchor="middle" fill="#fff">1</text>` },
  { n: "Notepad", run: true, g: svg`<path d="M7 2L22 4L17 23L2 20Z" fill="#79b7bd"/><path d="M7 2L20 4L16 18L4 16Z" fill="#b7e0e2"/><path d="M22 4L17 23L22 20Z" fill="#57767c"/>` },
  { n: "Word", run: true, g: svg`<path d="M6 1H23V23H6Z" fill="#2b7cd3"/><path d="M6 1H23V7H6Z" fill="#41a5ee"/><path d="M6 17H23V23H6Z" fill="#103f91"/><path d="M0 6H12V18H0Z" fill="#185abd"/><text x="6" y="16" font-size="10" font-weight="700" text-anchor="middle" fill="#fff">W</text>` },
  { n: "Viewer", run: true, g: svg`<path d="M1 2H23V22H1Z" fill="#f2f2f2" stroke="#999"/><path d="M1 3.500H23" stroke="#999"/><path d="M3 6H14V18H3Z" fill="#3f7f6b"/><path d="M6 8H13V14H6Z" fill="#d6e8e0"/><path d="M16 7H21M16 9H21M20 11V14" stroke="#777"/>` },
  { n: "InVid Secure", run: true, g: svg`<path d="M0 0H24V24H0Z" fill="#0f2130"/><path d="M0 0H24V11H0Z" fill="#f5f5f5"/><text x="10" y="9" font-size="7" font-weight="700" text-anchor="middle" fill="#111">InVid</text><path d="M19 3L24 6L19 9Z" fill="#111"/><text x="12" y="19" font-size="6" font-weight="700" text-anchor="middle" fill="#fff">SECURE</text>` },
  { n: "Paint", run: true, cls: "active", g: null },
  { n: "Photos", run: true, g: svg`<path d="M1 1H23V23H1Z" fill="#2b7fd8"/><path d="M1 23V14L9 8L23 23Z" fill="#123a73"/><path d="M12 15L17 11L23 17V23H20Z" fill="#1c559e"/><circle cx="16" cy="6" r="2" fill="#fff"/>` },
];

@customElement("task-bar")
export class TaskBar extends LitElement {
  static styles = [base, css`
    :host { display: flex; height: 39px; background: #d6d6d6; color: #1c1c1c; }
    button { display: grid; place-items: center; flex: none; }
    .start { width: 49px; }
    .search { width: 341px; margin: 1px 0 2px; background: #fff; display: flex; align-items: center; gap: 11px; padding-left: 11px; }
    .search input { border: 0; outline: 0; flex: 1; min-width: 0; font: 13px "Open Sans", sans-serif; padding: 0; background: none; }
    .search input::placeholder { color: #3a3a3a; opacity: 1; }
    .cort { width: 49px; }
    .app { width: 49px; position: relative; }
    .app.run::after { content: ""; position: absolute; left: 4px; right: 4px; bottom: 0; height: 2px; background: #0a72c9; }
    .app.alert { background: #f7a970; } .app.alert::after { background: #f76b0c; left: 0; right: 0; }
    .app.active { background: #f0f0f0; } .app.active::after { left: 0; right: 0; }
    .tray { margin-left: auto; display: flex; align-items: center; gap: 12px; padding-right: 14px; border-right: 1px solid #aaa; margin-right: 4px; }
    .clock { text-align: right; line-height: 17px; white-space: nowrap; font-size: 11px; padding: 0 3px 3px 0; }
  `];
  render() {
    return html`
      <button class="start" aria-label="Start">${icon(17, 17, svg`<path d="M0 2.500L7 1.500V8H0ZM8 1.300L17 0V8H8ZM0 9H7V15.500L0 14.500ZM8 9H17V17L8 15.700Z" fill="#111"/>`)}</button>
      <label class="search">${icon(17, 17, svg`<circle cx="10.500" cy="6.500" r="5.500" stroke="#222" stroke-width="1.300"/><path d="M6.500 10.500L1 16" stroke="#222" stroke-width="1.300"/>`)}<input type="search" aria-label="Search" placeholder="Type here to search"></label>
      <button class="cort" aria-label="Cortana">${icon(17, 17, svg`<circle cx="8.500" cy="8.500" r="6.800" stroke="#111" stroke-width="2"/>`)}</button>
      <button class="cort" aria-label="Task View">${icon(18, 16, svg`<path d="M1 0V2.500H11V0M1 16V13.500H11V16M1.500 5H10.500V11H1.500ZM15 0V3M15 8V16" stroke="#111" stroke-width="1.300"/><path d="M14 4H17V7H14Z" fill="#111"/>`)}</button>
      ${APPS.map((a) => html`<button class=${classMap({ app: true, run: !!a.run, alert: a.cls === "alert", active: a.cls === "active" })} aria-label=${a.n}>${a.g ? icon(24, 24, a.g) : paletteGlyph(24)}</button>`)}
      <div class="tray">
        ${icon(13, 8, svg`<path d="M1 7L6.500 1.500L12 7" stroke="#111" stroke-width="1.500"/>`)}
        <div class="clock">12:26 PM<br>9/18/2020</div>
        <button aria-label="Notifications">${icon(26, 26, svg`<path d="M2 1H18V14H10L6 18V14H2Z" fill="#111"/><path d="M4.500 5H15.500M4.500 8H15.500M4.500 11H15.500" stroke="#ddd"/><circle cx="17" cy="17" r="7.500" fill="#d6d6d6" stroke="#555"/><text x="17" y="21" font-size="11" font-weight="700" text-anchor="middle" fill="#111">2</text>`)}</button>
      </div>`;
  }
}

/* ---------- shell ---------- */
@customElement("app-root")
export class AppRoot extends LitElement {
  static styles = [base, css`
    :host { display: flex; flex-direction: column; height: 100vh; overflow: hidden; background: #f0f0f0; }
    .work { flex: 1; min-height: 0; display: flex; }
    .view { flex: 1; min-width: 0; overflow: hidden; position: relative; display: flex; flex-direction: column; padding: 6px 0 0 5px; background: linear-gradient(#c8cedd, #cbd3e6 30%, #d6e2f1); border-bottom: 1px solid #fff; }
    .marks { position: absolute; left: 0; top: 0; width: 100%; height: 100%; pointer-events: none; }
    .vs { width: 17px; display: flex; flex-direction: column; background: #f0f0f0; }
    .vs button, .hs button { width: 17px; height: 17px; display: grid; place-items: center; flex: none; }
    .vs .track { flex: 1; padding: 1px 1px 173px 1px; display: flex; flex-direction: column; }
    .vs i { flex: 1; background: #cdcdcd; }
    .hs { height: 16px; display: flex; padding-right: 17px; background: #f0f0f0; align-items: stretch; }
    .hs button { height: 16px; }
    .hs .track { flex: 1; padding-right: 27px; display: flex; }
    .hs i { flex: 1; background: #cdcdcd; }
    .status { height: 26px; border-top: 1px solid #d4d4d4; display: flex; align-items: center; color: #1f1f1f; }
    .cell { width: 156px; height: 23px; border-right: 1px solid #d4d4d4; display: flex; align-items: center; gap: 6px; padding-left: 5px; }
    .zoom { margin-left: auto; height: 23px; border-left: 1px solid #d4d4d4; display: flex; align-items: center; padding: 0 4px 0 21px; gap: 9px; }
    .zoom span { margin-right: -2px; }
    input[type="range"] { appearance: none; width: 86px; height: 18px; margin: 0 1px; background: linear-gradient(#d3d3d3, #d3d3d3) center / 100% 3px no-repeat; }
    input[type="range"]::-webkit-slider-thumb { appearance: none; width: 10px; height: 16px; background: #0a78d1; clip-path: polygon(0 0, 100% 0, 100% 70%, 50% 100%, 0 70%); }
  `];
  render() {
    const arrow = (d: string) => icon(9, 9, svg`<path d=${d} stroke="#505050" stroke-width="2"/>`);
    return html`
      <paint-ribbon></paint-ribbon>
      <div class="work">
        <div class="view">
          <browser-bar></browser-bar>
          <camera-page></camera-page>
          <svg class="marks" fill="none" stroke="#ec1c24" stroke-width="5" aria-hidden="true">
            <ellipse cx="1111" cy="452" rx="532" ry="338"/>
            <ellipse cx="99" cy="393" rx="77" ry="18"/>
            <ellipse cx="101" cy="524" rx="39" ry="15"/>
          </svg>
        </div>
        <div class="vs"><button aria-label="Scroll up">${arrow("M1 6.500L4.500 3L8 6.500")}</button><div class="track"><i></i></div><button aria-label="Scroll down">${arrow("M1 2.500L4.500 6L8 2.500")}</button></div>
      </div>
      <div class="hs"><button aria-label="Scroll left">${arrow("M6.500 1L3 4.500L6.500 8")}</button><div class="track"><i></i></div><button aria-label="Scroll right">${arrow("M2.500 1L6 4.500L2.500 8")}</button></div>
      <div class="status">
        <div class="cell">${icon(11, 11, svg`<path d="M5.500 0V11M0 5.500H11M4 2L5.500 .5L7 2M4 9L5.500 10.500L7 9M2 4L.5 5.500L2 7M9 4L10.500 5.500L9 7" stroke="#34566f"/>`)}1040, 3px</div>
        <div class="cell">${icon(13, 12, svg`<path d="M1.500 0V9M0 2L1.500 .5L3 2M4 10.500H13M11 9L12.500 10.500L11 12" stroke="#34566f"/><path d="M4.500 .5H11.500V7.500H4.500Z" stroke="#34566f" stroke-dasharray="1.500 1"/>`)}</div>
        <div class="cell">${icon(12, 12, svg`<path d="M1.500 0V9M4.500 .5H11.500V7.500H4.500ZM4 10.500H12M10 9L11.500 10.500L10 12M0 1H3" stroke="#34566f"/>`)}1920 × 1080px</div>
        <div class="cell"></div>
        <div class="zoom"><span>100%</span>
          <button aria-label="Zoom out">${icon(16, 16, svg`<circle cx="8" cy="8" r="7.300" stroke="#666" fill="#fafafa"/><path d="M4 8H12" stroke="#444" stroke-width="1.800"/>`)}</button>
          <input type="range" aria-label="Zoom" min="0" max="100" value="50">
          <button aria-label="Zoom in">${icon(16, 16, svg`<circle cx="8" cy="8" r="7.300" stroke="#666" fill="#fafafa"/><path d="M4 8H12M8 4V12" stroke="#444" stroke-width="1.800"/>`)}</button>
        </div>
      </div>
      <task-bar></task-bar>`;
  }
}
